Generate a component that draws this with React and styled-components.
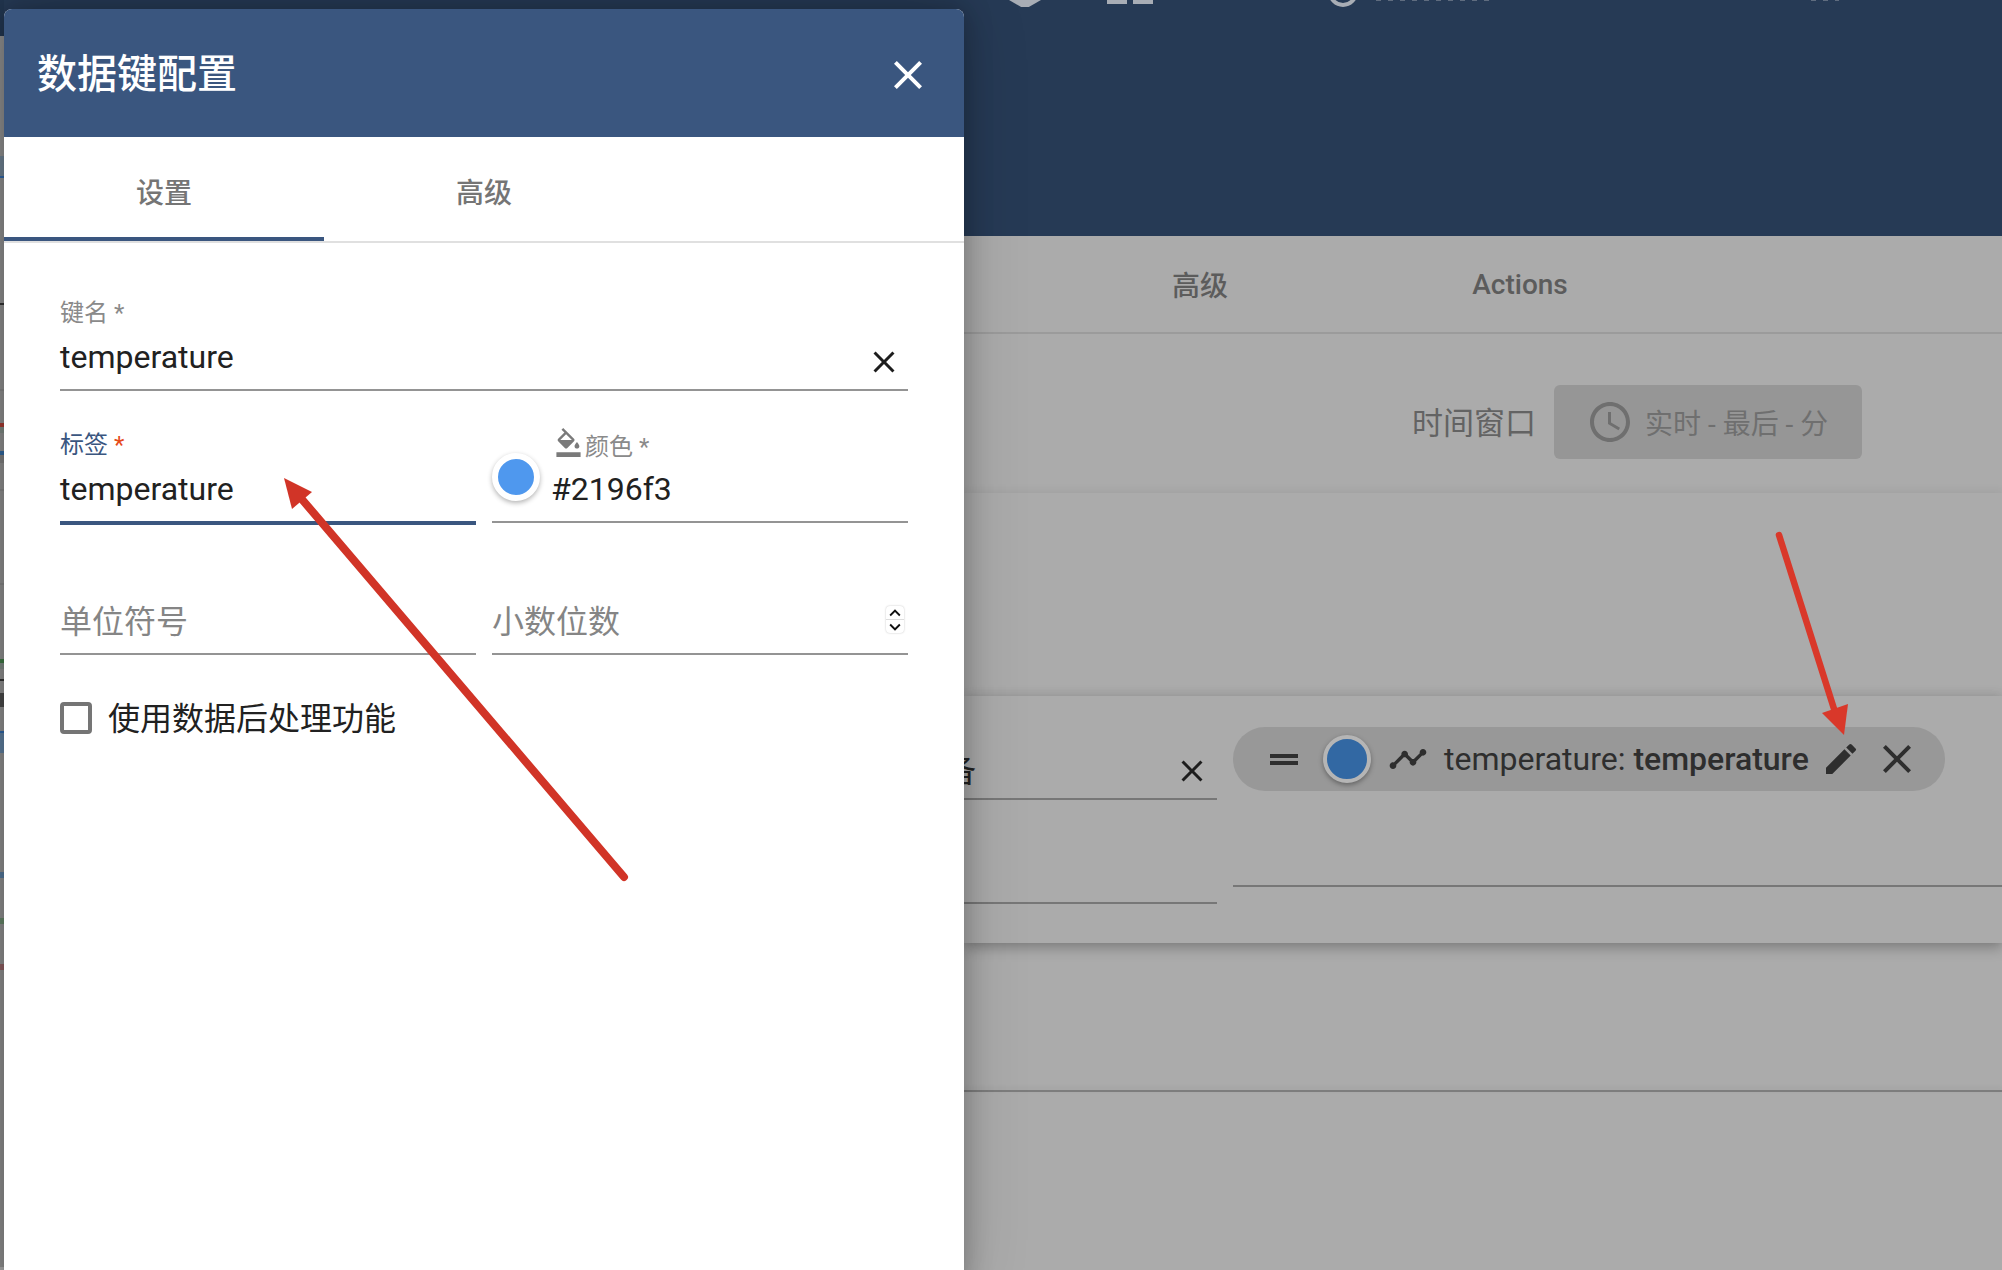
import React from 'react'
import styled, { createGlobalStyle } from 'styled-components'
import { MdClose, MdEdit, MdTimeline, MdFormatColorFill, MdAccessTime, MdKeyboardArrowUp, MdKeyboardArrowDown } from 'react-icons/md'

const GlobalStyle = createGlobalStyle`
html, body {
    margin: 0;
    padding: 0;
    background: #ababab;
}
body {
    font-family: Roboto, "Noto Sans CJK SC", sans-serif;
}
`

const sliverParts = [
    { h: 36, c: '#223650' }, { h: 120, c: '#8f8f8f' }, { h: 20, c: '#6f8292' }, { h: 2, c: '#2f66a8' },
    { h: 125, c: '#8f8f8f' }, { h: 2, c: '#333333' }, { h: 84, c: '#8f8f8f' }, { h: 2, c: '#858585' },
    { h: 32, c: '#8f8f8f' }, { h: 4, c: '#a83a32' }, { h: 6, c: '#7f8a84' }, { h: 18, c: '#8f8f8f' },
    { h: 4, c: '#32689f' }, { h: 8, c: '#808080' }, { h: 26, c: '#8f8f8f' }, { h: 2, c: '#858585' },
    { h: 92, c: '#8f8f8f' }, { h: 2, c: '#858585' }, { h: 74, c: '#8f8f8f' }, { h: 4, c: '#3f7a44' },
    { h: 6, c: '#7f8a84' }, { h: 10, c: '#8f8f8f' }, { h: 2, c: '#333333' }, { h: 12, c: '#8f8f8f' },
    { h: 14, c: '#4a4a4a' }, { h: 24, c: '#8f8f8f' }, { h: 2, c: '#2f66a8' }, { h: 20, c: '#5f7f9f' },
    { h: 119, c: '#8f8f8f' }, { h: 6, c: '#55799b' }, { h: 40, c: '#8f8f8f' }, { h: 6, c: '#66866a' },
    { h: 40, c: '#8f8f8f' }, { h: 6, c: '#8f5f62' }, { h: 297, c: '#8f8f8f' },
]

const App = () => {
    return (
        <Page>
            <GlobalStyle />
            <Sliver>
                {sliverParts.map((p, i) => <SliverPart key={i} $h={p.h} $c={p.c} />)}
            </Sliver>

            <Back>
                <TopBar>
                    <CutIcons>
                        <CutFigure />
                        <CutBars><i /><i /></CutBars>
                        <CutRing />
                        <CutDots />
                        <CutDots $short />
                    </CutIcons>
                </TopBar>
                <BackTabs>
                    <BackTab>高级</BackTab>
                    <BackTab>Actions</BackTab>
                </BackTabs>
                <Toolbar>
                    <TimeLabel>时间窗口</TimeLabel>
                    <TimeButton>
                        <MdAccessTime size={48} />
                        <span>实时 - 最后 - 分</span>
                    </TimeButton>
                </Toolbar>
                <EmptyCard />
                <KeysCard>
                    <DeviceColumn>
                        <DeviceField>
                            <DeviceName>设备</DeviceName>
                            <MdClose size={36} color="#1d1d1d" />
                        </DeviceField>
                        <DeviceField $short />
                    </DeviceColumn>
                    <KeysColumn>
                        <KeyChip>
                            <DragHandle />
                            <ChipDot />
                            <MdTimeline size={40} />
                            <ChipText>temperature: <b>temperature</b></ChipText>
                            <MdEdit size={40} />
                            <ChipRemove><MdClose size={48} /></ChipRemove>
                        </KeyChip>
                    </KeysColumn>
                </KeysCard>
                <BottomLine />
            </Back>

            <Dialog>
                <DialogHeader>
                    <DialogTitle>数据键配置</DialogTitle>
                    <DialogClose><MdClose size={48} color="#ffffff" /></DialogClose>
                </DialogHeader>
                <DialogTabs>
                    <DialogTab $active>设置</DialogTab>
                    <DialogTab>高级</DialogTab>
                </DialogTabs>
                <Form>
                    <FieldRow>
                        <Field>
                            <FieldLabel>键名 *</FieldLabel>
                            <FieldValue>
                                temperature
                                <ClearIcon><MdClose size={36} color="#1d1d1d" /></ClearIcon>
                            </FieldValue>
                        </Field>
                    </FieldRow>
                    <FieldRow>
                        <Field $focused>
                            <FieldLabel $focused><span>标签 <em>*</em></span></FieldLabel>
                            <FieldValue>temperature</FieldValue>
                        </Field>
                        <Field>
                            <FieldLabel $indent>
                                <MdFormatColorFill size={29} />
                                <span>颜色 *</span>
                            </FieldLabel>
                            <FieldValue $indent>
                                <ColorDot />
                                #2196f3
                            </FieldValue>
                        </Field>
                    </FieldRow>
                    <FieldRow>
                        <Field>
                            <FieldValue $placeholder>单位符号</FieldValue>
                        </Field>
                        <Field>
                            <FieldValue $placeholder>
                                小数位数
                                <Spinner>
                                    <SpinStep $top><MdKeyboardArrowUp size={22} /></SpinStep>
                                    <SpinStep><MdKeyboardArrowDown size={22} /></SpinStep>
                                </Spinner>
                            </FieldValue>
                        </Field>
                    </FieldRow>
                    <CheckRow>
                        <CheckBox />
                        <CheckText>使用数据后处理功能</CheckText>
                    </CheckRow>
                </Form>
            </Dialog>

            <Arrows viewBox="0 0 2002 1270">
                <line x1="624" y1="877" x2="300" y2="497" stroke="#d13427" strokeWidth="8" strokeLinecap="round" />
                <polygon points="284,478 312,492 292,509" fill="#d13427" />
                <line x1="1779" y1="535" x2="1835" y2="712" stroke="#d9382a" strokeWidth="6.5" strokeLinecap="round" />
                <polygon points="1844,735 1822,713 1848,704" fill="#d9382a" />
            </Arrows>
        </Page>
    )
}

export default App


const Page = styled.div`
position:relative;
display:flex;
width:2002px;
height:1270px;
overflow:hidden;
background-color:#ababab;
`

const Sliver = styled.div`
width:4px;
flex-shrink:0;
display:flex;
flex-direction:column;
`
const SliverPart = styled.div`
height:${p => p.$h}px;
flex-shrink:0;
background-color:${p => p.$c};
`

const Back = styled.div`
flex:1;
min-width:0;
display:flex;
flex-direction:column;
padding-left:960px;
`

const TopBar = styled.div`
height:236px;
flex-shrink:0;
margin-left:-960px;
padding-left:1005px;
background-color:#263a55;
`
const CutIcons = styled.div`
display:flex;
align-items:flex-end;
height:7px;
overflow:hidden;
`
const CutFigure = styled.div`
width:32px;
height:7px;
background-color:#a8adb5;
clip-path:polygon(0 0,100% 0,62% 100%,38% 100%);
`
const CutBars = styled.div`
display:flex;
gap:6px;
align-self:flex-start;
margin-left:66px;
i{
    display:block;
    width:20px;
    height:4px;
    background-color:#a8adb5;
}
`
const CutRing = styled.div`
width:30px;
height:30px;
margin-left:175px;
border:4px solid #a8adb5;
border-radius:50%;
box-sizing:border-box;
flex-shrink:0;
`
const CutDots = styled.div`
align-self:flex-start;
width:${p => p.$short ? 28 : 120}px;
height:1px;
margin-left:${p => p.$short ? 315 : 18}px;
background:repeating-linear-gradient(90deg,#5f6c7f 0 5px,transparent 5px 12px);
`

const BackTabs = styled.div`
height:98px;
flex-shrink:0;
box-sizing:border-box;
display:flex;
padding-left:76px;
background-color:#ababab;
border-bottom:2px solid #9b9b9b;
`
const BackTab = styled.div`
width:320px;
display:flex;
align-items:center;
justify-content:center;
font-size:28px;
font-weight:500;
color:#5c5c5c;
`

const Toolbar = styled.div`
height:159px;
flex-shrink:0;
box-sizing:border-box;
display:flex;
align-items:flex-start;
justify-content:flex-end;
gap:18px;
padding:51px 140px 0 0;
`
const TimeLabel = styled.div`
height:70px;
display:flex;
align-items:center;
font-size:31px;
color:#636363;
`
const TimeButton = styled.div`
width:308px;
height:74px;
box-sizing:border-box;
display:flex;
align-items:center;
gap:11px;
padding-left:32px;
border-radius:6px;
background-color:#969696;
color:#6f6f6f;
font-size:28px;
span{
    white-space:nowrap;
}
`

const EmptyCard = styled.div`
height:203px;
flex-shrink:0;
box-shadow:0 -3px 8px rgba(0,0,0,0.05);
`

const KeysCard = styled.div`
position:relative;
height:247px;
flex-shrink:0;
box-sizing:border-box;
display:flex;
gap:16px;
background-color:#ababab;
box-shadow:0 -4px 10px rgba(0,0,0,0.05), 0 5px 12px rgba(0,0,0,0.26);
`
const DeviceColumn = styled.div`
width:253px;
flex-shrink:0;
`
const DeviceField = styled.div`
position:relative;
height:104px;
box-sizing:border-box;
display:flex;
align-items:center;
justify-content:flex-end;
padding:48px 7px 0 0;
border-bottom:2px solid #777777;
`
const DeviceName = styled.span`
position:absolute;
right:241px;
bottom:7px;
font-size:32px;
white-space:nowrap;
color:#222222;
`
const KeysColumn = styled.div`
flex:1;
height:191px;
box-sizing:border-box;
padding-top:31px;
border-bottom:2px solid #777777;
`
const KeyChip = styled.div`
width:712px;
height:64px;
box-sizing:border-box;
display:flex;
align-items:center;
padding:0 12px 0 37px;
border-radius:32px;
background-color:#989898;
color:#2e2e2e;
svg{
    flex-shrink:0;
}
`
const DragHandle = styled.div`
width:28px;
height:11px;
flex-shrink:0;
box-sizing:border-box;
border-top:4px solid #2e2e2e;
border-bottom:4px solid #2e2e2e;
`
const ChipDot = styled.div`
width:48px;
height:48px;
flex-shrink:0;
box-sizing:border-box;
margin:0 17px 0 25px;
border:4px solid #b5b5b5;
border-radius:50%;
background-color:#3268a3;
box-shadow:0 2px 5px rgba(0,0,0,0.35);
`
const ChipText = styled.div`
margin:0 12px 0 16px;
font-size:32px;
white-space:nowrap;
b{
    font-weight:500;
}
`
const ChipRemove = styled.span`
display:flex;
margin-left:12px;
`

const BottomLine = styled.div`
height:2px;
margin-top:147px;
flex-shrink:0;
background-color:#7d7d7d;
box-shadow:0 -2px 5px rgba(0,0,0,0.08);
`

const Dialog = styled.div`
position:absolute;
left:4px;
top:9px;
width:960px;
height:1280px;
display:flex;
flex-direction:column;
background-color:#ffffff;
border-radius:8px 8px 0 0;
box-shadow:0 0 28px rgba(0,0,0,0.28), 0 0 70px rgba(0,0,0,0.14);
`
const DialogHeader = styled.div`
height:128px;
flex-shrink:0;
box-sizing:border-box;
display:flex;
align-items:center;
justify-content:space-between;
padding:0 32px 0 33px;
border-radius:8px 8px 0 0;
background-color:#3a567f;
`
const DialogTitle = styled.div`
padding-bottom:5px;
font-size:40px;
font-weight:500;
color:#ffffff;
`
const DialogClose = styled.span`
display:flex;
padding-top:4px;
`
const DialogTabs = styled.div`
height:106px;
flex-shrink:0;
box-sizing:border-box;
display:flex;
border-bottom:2px solid #e0e0e0;
`
const DialogTab = styled.div`
width:320px;
display:flex;
align-items:center;
justify-content:center;
box-sizing:border-box;
padding-top:8px;
border-bottom:4px solid ${p => p.$active ? '#3a567f' : 'transparent'};
font-size:28px;
font-weight:500;
color:#757575;
`

const Form = styled.div`
display:flex;
flex-direction:column;
padding:16px 56px 0 56px;
`
const FieldRow = styled.div`
height:132px;
display:flex;
align-items:flex-end;
gap:16px;
`
const Field = styled.div`
flex:1;
min-width:0;
display:flex;
flex-direction:column;
justify-content:flex-end;
margin-bottom:${p => p.$focused ? '-2px' : '0'};
border-bottom:${p => p.$focused ? '4px solid #3a567f' : '2px solid #949494'};
`
const FieldLabel = styled.div`
display:flex;
align-items:center;
height:36px;
padding-bottom:${p => p.$indent ? '1px' : '4px'};
box-sizing:border-box;
margin-left:${p => p.$indent ? '62px' : '0'};
font-size:24px;
line-height:32px;
white-space:pre;
color:${p => p.$focused ? '#3a567f' : '#8a8a8a'};
em{
    font-style:normal;
    color:#e64a19;
}
svg{
    color:#7a7a7a;
    margin:-8px 2px 0 0;
}
`
const FieldValue = styled.div`
position:relative;
height:56px;
display:flex;
align-items:center;
padding-left:${p => p.$indent ? '59px' : '0'};
font-size:32px;
padding-bottom:${p => p.$placeholder ? '13px' : '8px'};
box-sizing:border-box;
color:${p => p.$placeholder ? '#858585' : '#212121'};
`
const ClearIcon = styled.span`
position:absolute;
right:6px;
top:11px;
display:flex;
`
const ColorDot = styled.span`
position:absolute;
left:0;
top:-12px;
width:48px;
height:48px;
box-sizing:border-box;
border:6px solid #ffffff;
border-radius:50%;
background-color:#4f98ee;
box-shadow:0 2px 5px rgba(0,0,0,0.3);
`
const Spinner = styled.span`
position:absolute;
right:4px;
top:9px;
width:18px;
height:27px;
display:flex;
flex-direction:column;
border-radius:4px;
box-shadow:0 0 2px rgba(0,0,0,0.25);
color:#111111;
`
const SpinStep = styled.span`
height:13px;
flex:none;
display:flex;
align-items:center;
justify-content:center;
border-bottom:${p => p.$top ? '1px solid #dddddd' : 'none'};
svg{
    flex-shrink:0;
}
`
const CheckRow = styled.div`
display:flex;
align-items:center;
gap:16px;
margin-top:41px;
color:#212121;
`
const CheckText = styled.span`
font-size:32px;
margin-top:-3px;
`
const CheckBox = styled.span`
width:32px;
height:32px;
box-sizing:border-box;
border:4px solid #757575;
border-radius:4px;
flex-shrink:0;
`

const Arrows = styled.svg`
position:absolute;
left:0;
top:0;
width:2002px;
height:1270px;
pointer-events:none;
`
